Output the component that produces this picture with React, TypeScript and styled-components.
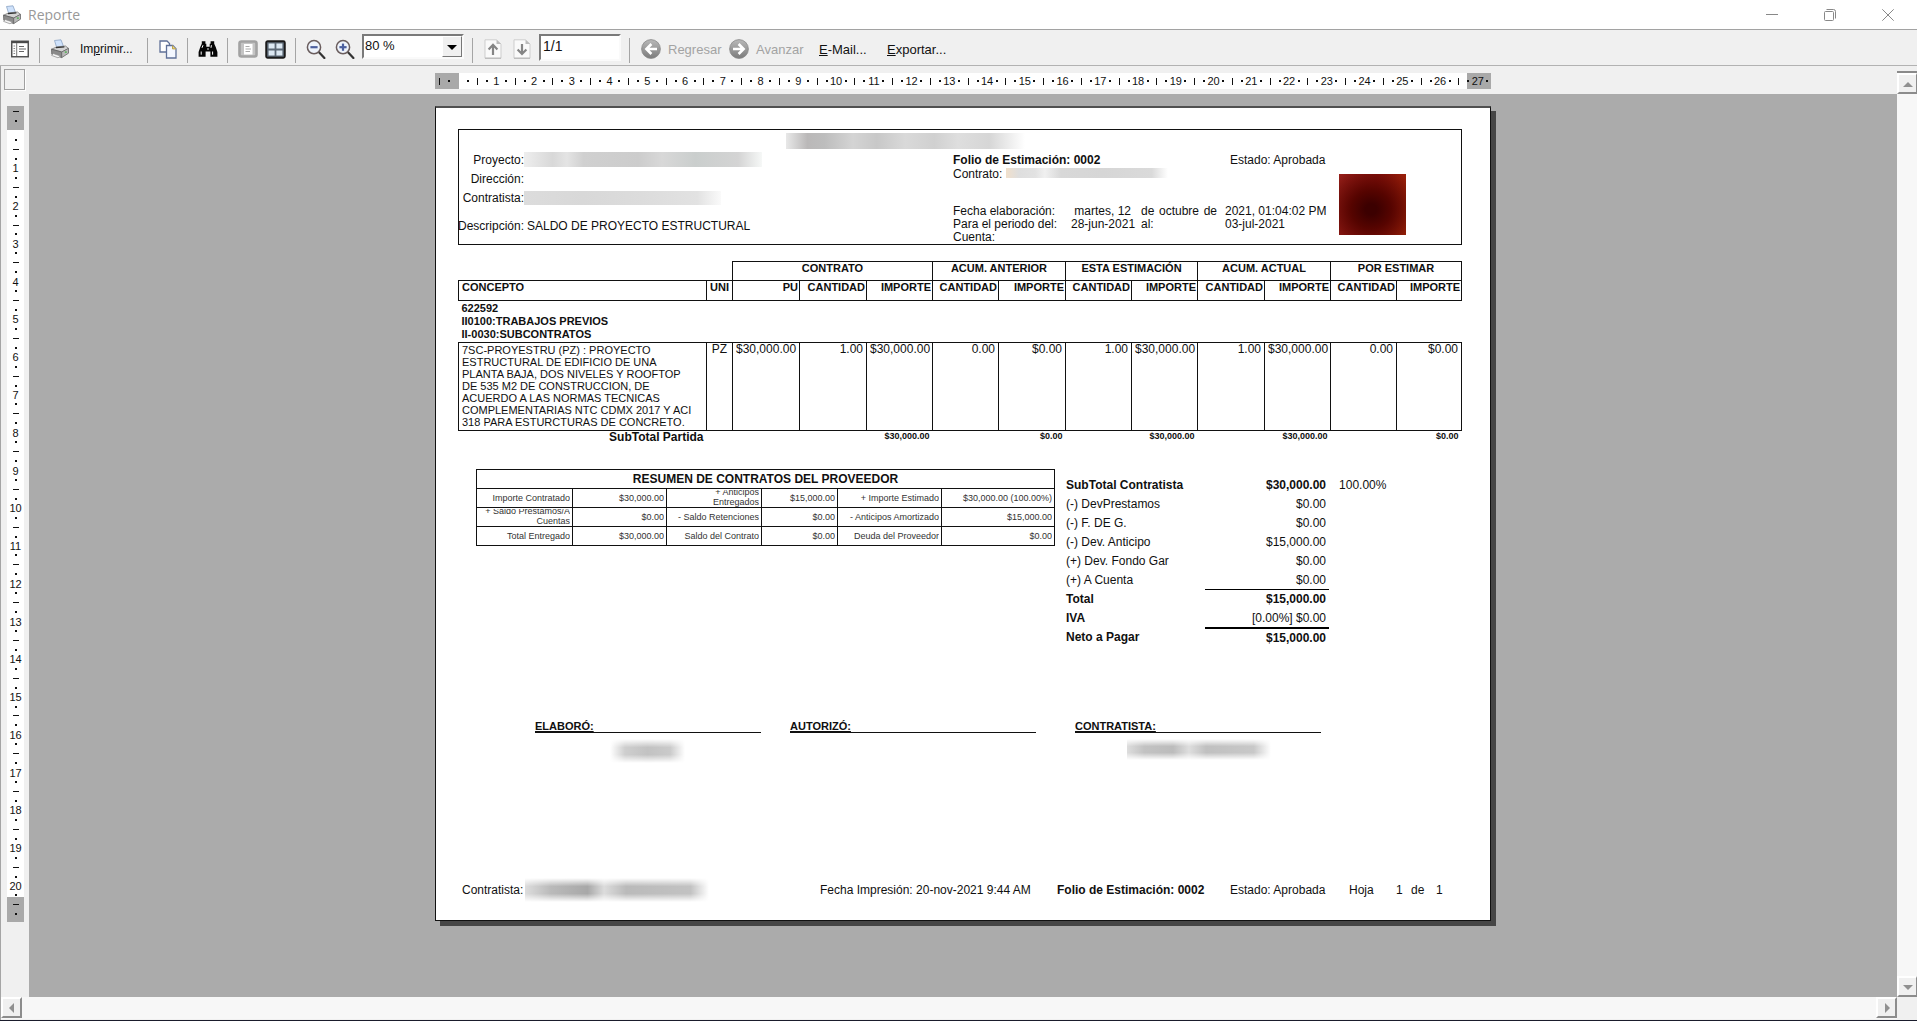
import React from "react";
import styled, { createGlobalStyle, css } from "styled-components";

const GlobalStyle = createGlobalStyle`
  * { box-sizing: border-box; }
  html, body, #root { height: 100%; }
  body {
    margin: 0;
    background: #f0f0f0;
    font-family: "Liberation Sans", Arial, sans-serif;
    font-size: 12px;
    color: #101010;
  }
  button, input, select { font: inherit; color: inherit; }
  button { border: 0; margin: 0; padding: 0; background: transparent; }
`;

/* ---------- window ---------- */

const Window = styled.div`
  display: flex;
  flex-direction: column;
  height: 100vh;
  background: #f0f0f0;
  border-bottom: 1px solid #1a1c2c;
`;

const TitleBar = styled.header`
  display: flex;
  align-items: center;
  flex: none;
  height: 30px;
  padding-left: 2px;
  background: #fff;
  border-bottom: 1px solid #a2a2a2;
`;

const Title = styled.h1`
  flex: 1;
  margin: 0 0 0 6px;
  font: 400 14px/20px "Open Sans", "Noto Sans", sans-serif;
  color: #999;
`;

const CaptionButton = styled.button`
  display: flex;
  align-items: center;
  justify-content: center;
  width: 58px;
  height: 28px;
`;

/* ---------- toolbar ---------- */

const Toolbar = styled.div`
  display: flex;
  align-items: flex-start;
  flex: none;
  height: 36px;
  padding: 4px 0 0 9px;
  border-bottom: 1px solid #b2b2b2;
`;

const Group = styled.div`
  display: flex;
  gap: 5px;
`;

const Separator = styled.div`
  flex: none;
  width: 1px;
  height: 25px;
  margin: 4px 8px 0;
  background: #a5a5a5;
`;

const IconButton = styled.button<{ $w?: number }>`
  display: flex;
  align-items: center;
  justify-content: center;
  width: ${(p) => p.$w ?? 23}px;
  height: 30px;
`;

const LabelButton = styled.button<{ $w?: number; $gap?: number; $pad?: number; $size?: number }>`
  display: flex;
  align-items: center;
  gap: ${(p) => p.$gap ?? 7}px;
  width: ${(p) => (p.$w ? `${p.$w}px` : "auto")};
  height: 30px;
  padding-left: ${(p) => p.$pad ?? 3}px;
  font-size: ${(p) => p.$size ?? 13}px;
  white-space: nowrap;
  &:disabled { color: #a3a3a3; }
  svg { flex: none; }
`;

const sunken = css`
  border: 2px solid;
  border-color: #7a7a7a #fafafa #fafafa #7a7a7a;
  background: #fff;
`;

const ZoomBox = styled.label`
  ${sunken}
  display: grid;
  grid-template-columns: 1fr 20px;
  width: 102px;
  height: 25px;
`;

const ZoomSelect = styled.select`
  grid-area: 1 / 1 / 2 / 3;
  width: 100%;
  height: 21px;
  padding: 0 0 2px 1px;
  border: 0;
  outline: 0;
  appearance: none;
  background: transparent;
  font-size: 13px;
`;

const ZoomArrow = styled.span`
  grid-area: 1 / 2;
  display: flex;
  align-items: center;
  justify-content: center;
  height: 21px;
  background: #f0f0f0;
  border: 1px solid;
  border-color: #fff #777 #777 #fff;
  pointer-events: none;
`;

const PageInput = styled.input`
  ${sunken}
  width: 82px;
  height: 27px;
  padding: 0 2px 4px;
  outline: 0;
  font-size: 14px;
`;

/* ---------- viewer ---------- */

const Viewer = styled.main`
  flex: 1;
  min-height: 0;
  display: grid;
  grid-template-columns: 28px minmax(0, 1fr) 20px;
  grid-template-rows: 28px minmax(0, 1fr) 23px;
  border-left: 1px solid #a5a5a5;
`;

const Corner = styled.div`
  padding: 3px 0 0 3px;
`;

const CornerButton = styled.button`
  display: block;
  width: 21px;
  height: 21px;
  border: 1px solid #a0a0a0;
  box-shadow: 1px 1px 0 #fff;
`;

const RulerRow = styled.div`
  display: flex;
  justify-content: center;
  align-items: flex-start;
  padding-top: 7px;
  overflow: hidden;
`;

const HRuler = styled.div`
  flex: none;
  width: 1056px;
  height: 16px;
  overflow: hidden;
  background: linear-gradient(90deg, #a9a9a9 24px, #fff 24px, #fff calc(100% - 24px), #a9a9a9 calc(100% - 24px));
`;

const HTicks = styled.div`
  display: grid;
  grid-template-columns: repeat(112, minmax(0, 1fr));
  width: 1057px;
  height: 16px;
`;

const VRulerColumn = styled.div`
  padding: 12px 0 0 6px;
  overflow: hidden;
`;

const VRuler = styled.div`
  width: 17px;
  height: 816px;
  padding-top: 1px;
  overflow: hidden;
  background: linear-gradient(#a9a9a9 24px, #fff 24px, #fff calc(100% - 25px), #a9a9a9 calc(100% - 25px));
`;

const VTicks = styled.div`
  display: grid;
  grid-template-rows: repeat(86, minmax(0, 1fr));
  height: 812px;
`;

const Tick = styled.span`
  display: flex;
  align-items: center;
  justify-content: center;
  min-width: 0;
  min-height: 0;
  font-size: 11px;
  line-height: 12px;
  color: #111;
`;

const Mark = styled.i<{ $w: number; $h: number }>`
  flex: none;
  width: ${(p) => p.$w}px;
  height: ${(p) => p.$h}px;
  background: #111;
`;

const Canvas = styled.div`
  display: flex;
  justify-content: center;
  align-items: flex-start;
  padding-top: 12px;
  overflow: auto;
  background: #ababab;
`;

const VScroll = styled.div`
  grid-row: 1 / 3;
  grid-column: 3;
  display: flex;
  flex-direction: column;
  background: #f7f7f7;
`;

const VScrollCap = styled.div`
  height: 7px;
  background: #f0f0f0;
  border-bottom: 2px solid #8a8a8a;
`;

const HScroll = styled.div`
  grid-row: 3;
  grid-column: 1 / 3;
  display: flex;
  background: #f7f7f7;
  border-bottom: 1px solid #f0f0f0;
`;

const Track = styled.div`
  flex: 1;
`;

const ScrollButton = styled.button`
  display: flex;
  align-items: center;
  justify-content: center;
  width: 21px;
  height: 21px;
  background: #f0f0f0;
  border: 2px solid;
  border-color: #fff #8c8c8c #8c8c8c #fff;
  ${VScroll} & { width: 20px; border-right-width: 1px; }
`;

/* ---------- paper ---------- */

const Paper = styled.article`
  flex: none;
  display: flex;
  flex-direction: column;
  width: 1056px;
  min-height: 815px;
  padding: 21px 28px 18px 22px;
  background: #fff;
  border: 1px solid #111;
  border-top: 2px solid #505050;
  box-shadow: 5px 5px 0 #464646;
`;

const Redacted = styled.span<{ $w: number; $h: number; $tone: string; $soft?: boolean }>`
  display: block;
  width: ${(p) => p.$w}px;
  height: ${(p) => p.$h}px;
  background: linear-gradient(90deg, ${(p) => p.$tone});
  ${(p) =>
    p.$soft &&
    css`
      mask-image: linear-gradient(transparent, #000 35%, #000 65%, transparent);
    `}
`;

const InfoBox = styled.section`
  height: 116px;
  border: 1px solid #111;
`;

const InfoTitle = styled.div`
  height: 20px;
  padding: 3px 0 0 327px;
`;

const InfoBody = styled.div`
  display: grid;
  grid-template-columns: 494px 386px auto;
  justify-content: start;
`;

const ProjectRow = styled.div<{ $gapTop?: boolean }>`
  display: grid;
  grid-template-columns: 65px auto;
  justify-content: start;
  align-items: center;
  height: 19px;
  margin-top: ${(p) => (p.$gapTop ? 9 : 0)}px;
  white-space: nowrap;
`;

const ProjectLabel = styled.span`
  display: flex;
  justify-content: flex-end;
`;

const Description = styled.span`
  padding-left: 3px;
`;

const Folio = styled.div`
  padding-top: 4px;
  line-height: 13px;
  white-space: nowrap;
`;

const FolioTop = styled.div`
  display: grid;
  grid-template-columns: 277px auto;
`;

const FolioRow = styled.div`
  display: flex;
  gap: 4px;
  height: 13px;
  margin-top: 1px;
`;

const Dates = styled.div`
  display: grid;
  grid-template-columns: 118px 60px 94px auto;
  margin-top: 24px;
`;

const DateMiddle = styled.span`
  display: flex;
  justify-content: space-between;
  padding: 0 8px 0 10px;
`;

const RightText = styled.span`
  text-align: right;
`;

const Stamp = styled.div`
  width: 67px;
  height: 61px;
  margin-top: 24px;
  background: radial-gradient(ellipse 72% 74% at 48% 58%, #3c0000 12%, #560400 42%, transparent 100%),
    linear-gradient(100deg, #96201a, #8c120c 50%, #9c2408);
`;

const Concepts = styled.table`
  width: 1004px;
  margin-top: 16px;
  table-layout: fixed;
  border-collapse: collapse;
  th, td {
    padding: 0 3px;
    vertical-align: top;
    text-align: right;
    line-height: 13px;
    white-space: nowrap;
  }
`;

const Head = styled.th<{ $align?: string; $pad?: number; $h?: number }>`
  && {
    height: ${(p) => p.$h ?? 20}px;
    padding: 0 ${(p) => p.$pad ?? 1}px;
    border: 1px solid #111;
    font-size: 11px;
    text-align: ${(p) => p.$align ?? "right"};
  }
`;

const Blank = styled.td`
  border: 0;
`;

const GroupCell = styled.td`
  && {
    height: 41px;
    padding: 1px 3px;
    text-align: left;
    font-weight: 700;
    font-size: 11px;
  }
`;

const Cell = styled.td<{ $align?: string }>`
  && {
    height: 88px;
    border: 1px solid #111;
    text-align: ${(p) => p.$align ?? "right"};
  }
`;

const ConceptCell = styled(Cell)`
  && {
    padding-top: 1px;
    font-size: 11px;
    line-height: 12px;
  }
`;

const Line = styled.span`
  display: block;
`;

const FootLabel = styled.th`
  && { height: 13px; }
`;

const FootAmount = styled.td`
  && {
    font-size: 9px;
    font-weight: 700;
    line-height: 11px;
  }
`;

const Lower = styled.section`
  display: flex;
  align-items: flex-start;
  gap: 11px;
  margin-top: 25px;
  padding-left: 18px;
`;

const Summary = styled.table`
  width: 579px;
  table-layout: fixed;
  border-collapse: collapse;
  font-size: 9px;
  color: #333;
`;

const SummaryTitle = styled.th`
  height: 19px;
  padding: 0;
  border: 1px solid #111;
  font-size: 12px;
  line-height: 13px;
  color: #101010;
`;

const SummaryCell = styled.td`
  height: 19px;
  padding: 0 2px;
  border: 1px solid #111;
  text-align: right;
`;

const Clip = styled.div<{ $two?: boolean }>`
  display: flex;
  flex-direction: column;
  justify-content: ${(p) => (p.$two ? "flex-end" : "center")};
  height: 17px;
  overflow: hidden;
  line-height: 10px;
  white-space: nowrap;
`;

const Totals = styled.table`
  margin-top: 6px;
  border-collapse: separate;
  border-spacing: 0;
`;

const TotalLabel = styled.th<{ $bold?: boolean }>`
  width: 139px;
  height: 19px;
  padding: 0;
  text-align: left;
  font-weight: ${(p) => (p.$bold ? 700 : 400)};
`;

const TotalValue = styled.td<{ $bold?: boolean; $rule?: number }>`
  width: 124px;
  padding: 0 3px 0 0;
  text-align: right;
  font-weight: ${(p) => (p.$bold ? 700 : 400)};
  border-top: ${(p) => p.$rule ?? 0}px solid #000;
`;

const TotalPercent = styled.td`
  padding: 0 0 0 10px;
`;

const Signatures = styled.section`
  display: grid;
  grid-template-columns: 226px 246px 246px;
  column-gap: 29px;
  margin-top: 74px;
  padding-left: 77px;
`;

const Signature = styled.div<{ $shift?: number; $indent?: number }>`
  margin: 0 ${(p) => -(p.$shift ?? 0)}px 0 ${(p) => p.$shift ?? 0}px;
  ${Redacted} { margin: 6px 0 0 ${(p) => p.$indent ?? 0}px; }
`;

const SignatureLabel = styled.div`
  height: 13px;
  border-bottom: 1px solid #111;
  font-size: 11px;
  font-weight: 700;
  line-height: 13px;
  text-decoration: underline;
`;

const PaperFooter = styled.footer`
  display: grid;
  grid-template-columns: 63px 295px 237px 173px 119px 47px 15px 25px auto;
  justify-content: start;
  align-items: center;
  height: 24px;
  margin-top: auto;
  padding-left: 4px;
  white-space: nowrap;
`;

/* ---------- icons ---------- */

const PrinterIcon = ({ size = 20 }: { size?: number }) => (
  <svg width={size} height={size} viewBox="0 0 20 20">
    <path d="M4.5 1.5 11 .8 13.5 7.5 7 9.5z" fill="#cfe2fb" stroke="#8aa3c4" strokeWidth=".8" />
    <path d="M1.5 10.2 7 7.8 15.5 7l3 2.4-6.8 3.6z" fill="#d4d4d4" stroke="#777" strokeWidth=".8" />
    <path d="M6 8.6 14.3 7.8" stroke="#333" strokeWidth="1.3" />
    <path d="M1.5 10.2 11.7 13v5.6L1.8 15.2z" fill="#8b8b8b" stroke="#5e5e5e" strokeWidth=".8" />
    <path d="M11.7 13 18.5 9.4v4.8l-6.8 4.4z" fill="#b9b9b9" stroke="#666" strokeWidth=".8" />
    <path d="M3.2 14.5 10.6 17 8 18.8 1.6 16.4z" fill="#f4f4f4" stroke="#888" strokeWidth=".7" />
    <rect x="14.8" y="12.4" width="2" height="1.4" fill="#4fb04f" />
  </svg>
);

const PanelIcon = () => (
  <svg width="18" height="18" viewBox="0 0 18 18">
    <rect x=".75" y="1.25" width="16.5" height="15.5" fill="#fff" stroke="#4a4a4a" strokeWidth="1.4" />
    <path d="M1 2.2h16" stroke="#4a4a4a" strokeWidth="2" />
    <path d="M2.5 6h1.6M2.5 8.5h1.6M2.5 11h1.6M2.5 13.5h1.6" stroke="#888" strokeWidth="1" />
    <path d="M5.7 3v13" stroke="#777" />
    <path d="M8 6.5h5M8 9h7M8 11.5h5" stroke="#666" strokeWidth="1.2" />
  </svg>
);

const CopyIcon = () => (
  <svg width="18" height="19" viewBox="0 0 18 19">
    <path d="M1 1h7l2.5 2.5V12H1z" fill="#fff" stroke="#5f7098" strokeWidth="1.3" />
    <path d="M7.5 5.5h6.3L17 8.7V18H7.5z" fill="#f3f7ff" stroke="#5f7098" strokeWidth="1.3" />
    <path d="M13.5 5.5v3.4H17" fill="#f2d675" stroke="#b9a04c" />
  </svg>
);

const BinocularsIcon = () => (
  <svg width="20" height="18" viewBox="0 0 20 18">
    <path d="M3.8 1.2h3.6v2.6h.9v3h3.4v-3h.9V1.2h3.6v2.6l1.5 3.2L19.4 12v4.8h-7V11.6H7.6v5.2h-7V12l1.7-5L3.8 3.8z" fill="#050505" />
    <path d="M3.2 11.5v3.2M14.6 11.5v3.2M5 5.2l-1 2.6M13.4 5.2l-.4 2.6" stroke="#fff" strokeWidth="1" />
    <circle cx="10" cy="9" r="1" fill="#999" />
  </svg>
);

const SinglePageIcon = () => (
  <svg width="20" height="18" viewBox="0 0 20 18">
    <rect x="1.5" y="1.5" width="17" height="15" rx="2" fill="#c4c4c4" stroke="#a2a2a2" strokeWidth="2.6" />
    <rect x="6" y="4" width="8.5" height="10.5" fill="#fff" />
    <path d="M7.5 6.5h4M7.5 9h5.5M7.5 11.5h4.5" stroke="#aaa" />
  </svg>
);

const FourPagesIcon = () => (
  <svg width="21" height="19" viewBox="0 0 21 19">
    <rect x="1.2" y="1.2" width="18.6" height="16.6" rx="1.5" fill="#5c6875" stroke="#1a1a1a" strokeWidth="1.9" />
    <path d="M3.6 3.4h6v5.2h-6zM11.4 3.4h6v5.2h-6zM3.6 10.4h6v5.2h-6zM11.4 10.4h6v5.2h-6z" fill="#dce8f2" />
  </svg>
);

const LensIcon = ({ plus }: { plus?: boolean }) => (
  <svg width="20" height="20" viewBox="0 0 20 20">
    <path d="M13 13.2 18.4 19" stroke="#333" strokeWidth="2.2" strokeLinecap="round" />
    <circle cx="8" cy="8.2" r="6.6" fill="#eef3fb" stroke="#6a5d5d" strokeWidth="1.5" />
    <path d="M4.4 8.2h7.2" stroke="#4c5f9e" strokeWidth="2.2" />
    {plus && <path d="M8 4.6v7.2" stroke="#4c5f9e" strokeWidth="2.2" />}
  </svg>
);

const PageArrowIcon = ({ down }: { down?: boolean }) => (
  <svg width="18" height="20" viewBox="0 0 18 20">
    <path d="M1 .8h11.5L17 5v14.2H1z" fill="#fafafa" stroke="#cdcdcd" />
    <path d="M12.5.8V5H17z" fill="#bbb" />
    <path d="M1 19.2h16" stroke="#b2b2b2" />
    {down ? (
      <path d="M9 5v10M4.6 10.4 9 15l4.4-4.6" fill="none" stroke="#858585" strokeWidth="2.2" />
    ) : (
      <path d="M9 16V6M4.6 10.4 9 5.8l4.4 4.6" fill="none" stroke="#858585" strokeWidth="2.2" />
    )}
  </svg>
);

const CircleArrowIcon = ({ forward }: { forward?: boolean }) => (
  <svg width="20" height="20" viewBox="0 0 20 20">
    <defs>
      <linearGradient id={forward ? "discF" : "discB"} x1="0" y1="0" x2="0" y2="1">
        <stop offset="0" stopColor="#b9b9b9" />
        <stop offset="1" stopColor="#7b7b7b" />
      </linearGradient>
    </defs>
    <circle cx="10" cy="10" r="9.4" fill={`url(#${forward ? "discF" : "discB"})`} stroke="#888" strokeWidth=".8" />
    <path
      d={forward ? "M4 10h10M9.6 5l5 5-5 5" : "M16 10H6M10.4 5l-5 5 5 5"}
      fill="none"
      stroke="#fff"
      strokeWidth="2.6"
    />
  </svg>
);

const arrows = {
  up: "M5 3 10 8H0z",
  down: "M0 3h10L5 8z",
  left: "M7 0v10L2 5z",
  right: "M3 0v10l5-5z",
};

const Arrow = ({ dir, color = "#909090" }: { dir: keyof typeof arrows; color?: string }) => (
  <svg width="10" height="10" viewBox="0 0 10 10">
    <path d={arrows[dir]} fill={color} />
  </svg>
);

/* ---------- rulers ---------- */

type Mk = "dot" | "bar" | "none" | number;

// One mark every quarter of a centimetre, starting half a centimetre before zero.
const marks = (count: number): Mk[] =>
  Array.from({ length: count }, (_, i) => {
    const q = i - 2;
    if (q === 0) return "none";
    if (q % 4 === 0) return q / 4;
    return q % 2 === 0 ? "bar" : "dot";
  });

const hMarks = marks(112);
const vMarks = marks(86);

const Ticks = ({ items, vertical }: { items: Mk[]; vertical?: boolean }) => (
  <>
    {items.map((m, i) => (
      <Tick key={i}>
        {m === "dot" && <Mark $w={2} $h={2} />}
        {m === "bar" && <Mark $w={vertical ? 6 : 1} $h={vertical ? 1 : 7} />}
        {typeof m === "number" && m}
      </Tick>
    ))}
  </>
);

/* ---------- report data ---------- */

const columns = [248, 26, 67, 67, 66, 66, 67, 66, 66, 67, 66, 66, 65];
const groups: [string, number][] = [
  ["CONTRATO", 3],
  ["ACUM. ANTERIOR", 2],
  ["ESTA ESTIMACIÓN", 2],
  ["ACUM. ACTUAL", 2],
  ["POR ESTIMAR", 2],
];
const subHeads = ["PU", "CANTIDAD", "IMPORTE", "CANTIDAD", "IMPORTE", "CANTIDAD", "IMPORTE", "CANTIDAD", "IMPORTE", "CANTIDAD", "IMPORTE"];
const concept = [
  "7SC-PROYESTRU (PZ) : PROYECTO",
  "ESTRUCTURAL DE EDIFICIO DE UNA",
  "PLANTA BAJA, DOS NIVELES Y ROOFTOP",
  "DE 535 M2 DE CONSTRUCCION, DE",
  "ACUERDO A LAS NORMAS TECNICAS",
  "COMPLEMENTARIAS NTC CDMX 2017 Y ACI",
  "318 PARA ESTURCTURAS DE CONCRETO.",
];
const amounts = ["$30,000.00", "1.00", "$30,000.00", "0.00", "$0.00", "1.00", "$30,000.00", "1.00", "$30,000.00", "0.00", "$0.00"];
const subtotals = ["", "", "", "$30,000.00", "", "$0.00", "", "$30,000.00", "", "$30,000.00", "", "$0.00"];

const summaryColumns = [96, 94, 95, 76, 104, 113];
const summary: string[][] = [
  ["Importe Contratado", "$30,000.00", "+ Anticipos|Entregados", "$15,000.00", "+ Importe Estimado", "$30,000.00 (100.00%)"],
  ["+ Saldo Prestamos/A|Cuentas", "$0.00", "- Saldo Retenciones", "$0.00", "- Anticipos Amortizado", "$15,000.00"],
  ["Total Entregado", "$30,000.00", "Saldo del Contrato", "$0.00", "Deuda del Proveedor", "$0.00"],
];

type TotalRow = { label: string; value: string; bold?: boolean; boldValue?: boolean; rule?: number; percent?: string };
const totals: TotalRow[] = [
  { label: "SubTotal Contratista", value: "$30,000.00", bold: true, boldValue: true, percent: "100.00%" },
  { label: "(-) DevPrestamos", value: "$0.00" },
  { label: "(-) F. DE G.", value: "$0.00" },
  { label: "(-) Dev. Anticipo", value: "$15,000.00" },
  { label: "(+) Dev. Fondo Gar", value: "$0.00" },
  { label: "(+) A Cuenta", value: "$0.00" },
  { label: "Total", value: "$15,000.00", bold: true, boldValue: true, rule: 1 },
  { label: "IVA", value: "[0.00%] $0.00", bold: true },
  { label: "Neto a Pagar", value: "$15,000.00", bold: true, boldValue: true, rule: 2 },
];

/* ---------- page ---------- */

const Report = () => (
  <Paper>
    <InfoBox>
      <InfoTitle>
        <Redacted $w={239} $h={16} $tone="#e8e8e8, #bab8b8 9%, #bdbdbd 16%, #d4d4d4 28%, #c8c8c8 38%, #d9d9d9 50%, #d0d0d0 62%, #dedede 72%, #d6d6d6 85%, #fff" />
      </InfoTitle>
      <InfoBody>
        <div>
          <ProjectRow>
            <ProjectLabel>Proyecto:</ProjectLabel>
            <Redacted $w={238} $h={15} $tone="#eee, #d8d8d8 12%, #e4e4e4 18%, #d0d0d0 25%, #cccccc 48%, #d8d8d8 58%, #cacecd 72%, #d4d4d4 90%, #f6f8f7" />
          </ProjectRow>
          <ProjectRow>
            <ProjectLabel>Dirección:</ProjectLabel>
          </ProjectRow>
          <ProjectRow>
            <ProjectLabel>Contratista:</ProjectLabel>
            <Redacted $w={197} $h={14} $tone="#dcdcdc, #d8d8d8 30%, #dcdcdc 60%, #e2e2e2 88%, #fafafa" />
          </ProjectRow>
          <ProjectRow $gapTop>
            <ProjectLabel>Descripción:</ProjectLabel>
            <Description>SALDO DE PROYECTO ESTRUCTURAL</Description>
          </ProjectRow>
        </div>
        <Folio>
          <FolioTop>
            <strong>Folio de Estimación: 0002</strong>
            <span>Estado: Aprobada</span>
          </FolioTop>
          <FolioRow>
            <span>Contrato:</span>
            <Redacted $w={162} $h={10} $tone="#f1e0cc, #dedede 8%, #e2e2e2 18%, #f0f0f0 24%, #d8d8d8 34%, #d6d6d6 60%, #dadada 90%, #fff" />
          </FolioRow>
          <Dates>
            <span>Fecha elaboración:</span>
            <RightText>martes, 12</RightText>
            <DateMiddle>
              <span>de</span>
              <span>octubre</span>
              <span>de</span>
            </DateMiddle>
            <span>2021, 01:04:02 PM</span>
            <span>Para el periodo del:</span>
            <RightText>28-jun-2021</RightText>
            <DateMiddle>al:</DateMiddle>
            <span>03-jul-2021</span>
            <span>Cuenta:</span>
          </Dates>
        </Folio>
        <Stamp />
      </InfoBody>
    </InfoBox>

    <Concepts>
      <colgroup>
        {columns.map((w, i) => (
          <col key={i} width={w} />
        ))}
      </colgroup>
      <thead>
        <tr>
          <Blank colSpan={2} />
          {groups.map(([name, span]) => (
            <Head key={name} colSpan={span} $align="center" $h={19}>
              {name}
            </Head>
          ))}
        </tr>
        <tr>
          <Head $align="left" $pad={3}>CONCEPTO</Head>
          <Head $align="center">UNI</Head>
          {subHeads.map((h, i) => (
            <Head key={i}>{h}</Head>
          ))}
        </tr>
      </thead>
      <tbody>
        <tr>
          <GroupCell colSpan={13}>
            <Line>622592</Line>
            <Line>II0100:TRABAJOS PREVIOS</Line>
            <Line>II-0030:SUBCONTRATOS</Line>
          </GroupCell>
        </tr>
        <tr>
          <ConceptCell $align="left">
            {concept.map((l) => (
              <Line key={l}>{l}</Line>
            ))}
          </ConceptCell>
          <Cell $align="center">PZ</Cell>
          {amounts.map((a, i) => (
            <Cell key={i}>{a}</Cell>
          ))}
        </tr>
      </tbody>
      <tfoot>
        <tr>
          <FootLabel>SubTotal Partida</FootLabel>
          {subtotals.map((s, i) => (
            <FootAmount key={i}>{s}</FootAmount>
          ))}
        </tr>
      </tfoot>
    </Concepts>

    <Lower>
      <Summary>
        <colgroup>
          {summaryColumns.map((w, i) => (
            <col key={i} width={w} />
          ))}
        </colgroup>
        <thead>
          <tr>
            <SummaryTitle colSpan={6}>RESUMEN DE CONTRATOS DEL PROVEEDOR</SummaryTitle>
          </tr>
        </thead>
        <tbody>
          {summary.map((row, r) => (
            <tr key={r}>
              {row.map((text, c) => (
                <SummaryCell key={c}>
                  <Clip $two={text.includes("|")}>
                    {text.split("|").map((l) => (
                      <span key={l}>{l}</span>
                    ))}
                  </Clip>
                </SummaryCell>
              ))}
            </tr>
          ))}
        </tbody>
      </Summary>
      <Totals>
        <tbody>
          {totals.map((t) => (
            <tr key={t.label}>
              <TotalLabel scope="row" $bold={t.bold}>{t.label}</TotalLabel>
              <TotalValue $bold={t.boldValue} $rule={t.rule}>{t.value}</TotalValue>
              <TotalPercent>{t.percent}</TotalPercent>
            </tr>
          ))}
        </tbody>
      </Totals>
    </Lower>

    <Signatures>
      <Signature $indent={75}>
        <SignatureLabel>ELABORÓ:</SignatureLabel>
        <Redacted $soft $w={75} $h={24} $tone="#fff, #cecece 20%, #c2c2c2 50%, #cacaca 80%, #fff" />
      </Signature>
      <Signature>
        <SignatureLabel>AUTORIZÓ:</SignatureLabel>
      </Signature>
      <Signature $shift={10} $indent={52}>
        <SignatureLabel>CONTRATISTA:</SignatureLabel>
        <Redacted $soft $w={144} $h={21} $tone="#ddd, #c2c2c2 12%, #bcbcbc 32%, #dedede 43%, #c0c0c0 55%, #c8c8c8 88%, #fff" />
      </Signature>
    </Signatures>

    <PaperFooter>
      <span>Contratista:</span>
      <Redacted $soft $w={184} $h={24} $tone="#ddd, #bababa 14%, #a8a8a8 34%, #dcdcdc 43%, #bababa 55%, #c2c2c2 90%, #fff" />
      <span>Fecha Impresión: 20-nov-2021 9:44 AM</span>
      <strong>Folio de Estimación: 0002</strong>
      <span>Estado: Aprobada</span>
      <span>Hoja</span>
      <span>1</span>
      <span>de</span>
      <span>1</span>
    </PaperFooter>
  </Paper>
);

export default function App() {
  return (
    <Window>
      <GlobalStyle />
      <TitleBar>
        <PrinterIcon />
        <Title>Reporte</Title>
        <CaptionButton aria-label="Minimizar">
          <svg width="12" height="12" viewBox="0 0 12 12"><path d="M0 5.5h12" stroke="#888" /></svg>
        </CaptionButton>
        <CaptionButton aria-label="Restaurar">
          <svg width="12" height="12" viewBox="0 0 12 12" fill="none" stroke="#888">
            <rect x=".5" y="2.5" width="9" height="9" rx="1" />
            <path d="M2.5.5h7a2 2 0 0 1 2 2v7" />
          </svg>
        </CaptionButton>
        <CaptionButton aria-label="Cerrar">
          <svg width="12" height="12" viewBox="0 0 12 12"><path d="M.3.3 11.7 11.7M11.7.3.3 11.7" stroke="#888" /></svg>
        </CaptionButton>
      </TitleBar>

      <Toolbar>
        <IconButton $w={22} aria-label="Panel"><PanelIcon /></IconButton>
        <Separator />
        <LabelButton $w={91} $gap={10} $pad={2} $size={12}>
          <PrinterIcon />
          <span>Im<u>p</u>rimir...</span>
        </LabelButton>
        <Separator />
        <IconButton aria-label="Copiar"><CopyIcon /></IconButton>
        <Separator />
        <IconButton aria-label="Buscar"><BinocularsIcon /></IconButton>
        <Separator />
        <Group>
          <IconButton aria-label="Una página"><SinglePageIcon /></IconButton>
          <IconButton aria-label="Varias páginas"><FourPagesIcon /></IconButton>
        </Group>
        <Separator />
        <Group>
          <IconButton $w={24} aria-label="Alejar"><LensIcon /></IconButton>
          <IconButton $w={24} aria-label="Acercar"><LensIcon plus /></IconButton>
          <ZoomBox>
            <ZoomSelect aria-label="Zoom" defaultValue="80">
              <option value="80">80 %</option>
            </ZoomSelect>
            <ZoomArrow><Arrow dir="down" color="#000" /></ZoomArrow>
          </ZoomBox>
        </Group>
        <Separator />
        <Group>
          <IconButton $w={24} aria-label="Página anterior"><PageArrowIcon /></IconButton>
          <IconButton $w={24} aria-label="Página siguiente"><PageArrowIcon down /></IconButton>
          <PageInput aria-label="Página" defaultValue="1/1" />
        </Group>
        <Separator />
        <Group>
          <LabelButton disabled $w={83}><CircleArrowIcon />Regresar</LabelButton>
          <LabelButton disabled $w={78}><CircleArrowIcon forward />Avanzar</LabelButton>
          <LabelButton $w={63} $pad={10}><span><u>E</u>-Mail...</span></LabelButton>
          <LabelButton $pad={10}><span><u>E</u>xportar...</span></LabelButton>
        </Group>
      </Toolbar>

      <Viewer>
        <Corner><CornerButton aria-label="Unidades" /></Corner>
        <RulerRow>
          <HRuler><HTicks><Ticks items={hMarks} /></HTicks></HRuler>
        </RulerRow>
        <VScroll>
          <VScrollCap />
          <ScrollButton aria-label="Subir"><Arrow dir="up" /></ScrollButton>
          <Track />
          <ScrollButton aria-label="Bajar"><Arrow dir="down" /></ScrollButton>
        </VScroll>
        <VRulerColumn>
          <VRuler><VTicks><Ticks items={vMarks} vertical /></VTicks></VRuler>
        </VRulerColumn>
        <Canvas><Report /></Canvas>
        <HScroll>
          <ScrollButton aria-label="Izquierda"><Arrow dir="left" /></ScrollButton>
          <Track />
          <ScrollButton aria-label="Derecha"><Arrow dir="right" /></ScrollButton>
        </HScroll>
      </Viewer>
    </Window>
  );
}
